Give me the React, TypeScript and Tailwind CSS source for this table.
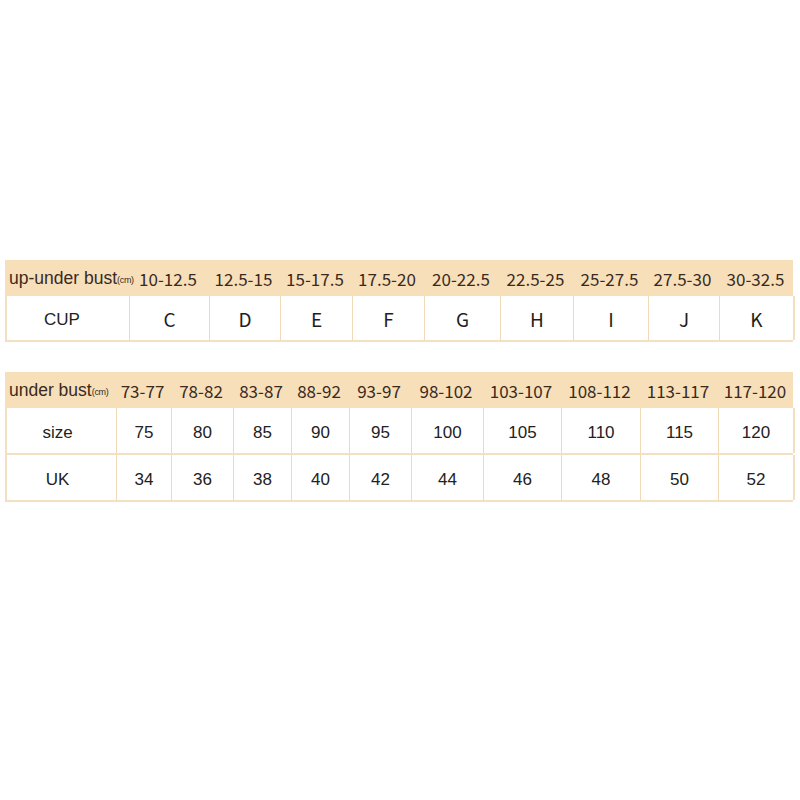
import React from "react";

const cjk = "font-['Noto_Sans_CJK_SC','Noto_Sans',sans-serif]";
const arial = "font-['Liberation_Sans',Arial,sans-serif]";

const t1Cols = "grid-cols-[123px_80px_71px_72px_72px_76px_73px_75px_71px_75px]";
const t2Cols = "grid-cols-[110px_55px_62px_58px_58px_62px_72px_78px_79px_78px_76px]";

const t1Head = ["10-12.5", "12.5-15", "15-17.5", "17.5-20", "20-22.5", "22.5-25", "25-27.5", "27.5-30", "30-32.5"];
const t1Cup = ["C", "D", "E", "F", "G", "H", "I", "J", "K"];

const t2Head = ["73-77", "78-82", "83-87", "88-92", "93-97", "98-102", "103-107", "108-112", "113-117", "117-120"];
const t2Size = ["75", "80", "85", "90", "95", "100", "105", "110", "115", "120"];
const t2UK = ["34", "36", "38", "40", "42", "44", "46", "48", "50", "52"];

function Label({ text }: { text: string }) {
  return (
    <div className={`flex items-center whitespace-nowrap pl-[4px] text-[17.5px] text-[#3a2a1e] ${arial}`}>
      <span>{text}</span>
      <span className="mt-[6px] text-[9px] tracking-[-0.3px]">(cm)</span>
    </div>
  );
}

export default function App() {
  return (
    <div className="h-[800px] w-[800px] bg-white pt-[260px]">
      {/* Table 1 */}
      <div className="ml-[5px] w-[788px]">
        <div className={`grid ${t1Cols} h-[36px] bg-[#f7dfba]`}>
          <Label text="up-under bust" />
          {t1Head.map((h) => (
            <div key={h} className={`flex items-center justify-center pt-[1px] text-[17px] text-[#3a2a1e] ${cjk}`}>
              {h}
            </div>
          ))}
        </div>
        <div className={`grid ${t1Cols} h-[46px] border-l-2 border-b-2 border-[#f3e0c2]`}>
          <div className={`flex items-center justify-center border-r border-[#f0dab6] pr-[12px] pt-[4px] text-[17px] text-[#222] ${arial}`}>
            CUP
          </div>
          {t1Cup.map((c, i) => (
            <div
              key={c}
              className={`flex items-center justify-center pt-[2px] ${i === t1Cup.length - 1 ? "border-r-2 border-[#f3e0c2]" : "border-r border-[#f0dab6]"} text-[19px] text-[#1e1e1e] ${cjk}`}
            >
              {c}
            </div>
          ))}
        </div>
      </div>

      {/* Table 2 */}
      <div className="ml-[5px] mt-[30px] w-[788px]">
        <div className={`grid ${t2Cols} h-[36px] bg-[#f7dfba]`}>
          <Label text="under bust" />
          {t2Head.map((h) => (
            <div key={h} className={`flex items-center justify-center whitespace-nowrap pt-[1px] text-[17px] text-[#3a2a1e] ${cjk}`}>
              {h}
            </div>
          ))}
        </div>
        {[
          { label: "size", vals: t2Size },
          { label: "UK", vals: t2UK },
        ].map((row) => (
          <div key={row.label} className={`grid ${t2Cols} h-[47px] border-l-2 border-b-2 border-[#f3e0c2]`}>
            <div className={`flex items-center justify-center border-r border-[#f0dab6] pr-[8px] pt-[5px] text-[17px] text-[#222] ${arial}`}>
              {row.label}
            </div>
            {row.vals.map((v, i) => (
              <div
                key={v}
                className={`flex items-center justify-center pt-[5px] ${i === row.vals.length - 1 ? "border-r-2 border-[#f3e0c2]" : "border-r border-[#f0dab6]"} text-[17px] text-[#222] ${arial}`}
              >
                {v}
              </div>
            ))}
          </div>
        ))}
      </div>
    </div>
  );
}
